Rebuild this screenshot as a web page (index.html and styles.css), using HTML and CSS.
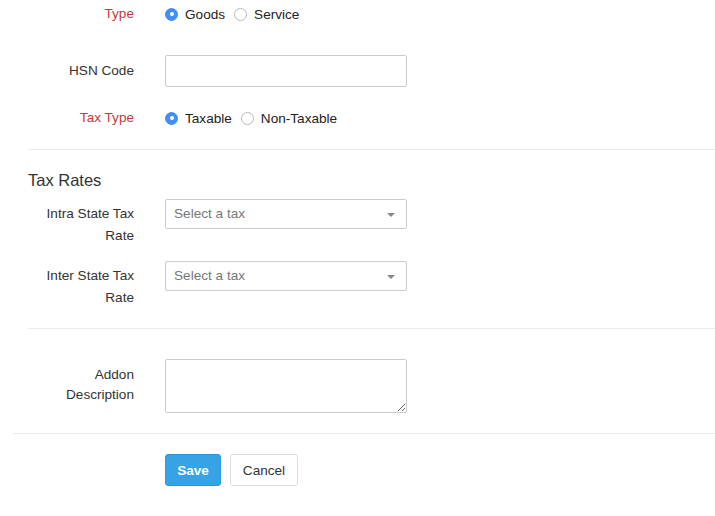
FILE: index.html
```html
<!DOCTYPE html>
<html>
<head>
<meta charset="utf-8">
<link rel="stylesheet" href="styles.css">
</head>
<body>
<form class="form">
  <div class="section">
    <div class="row row-radio">
      <label class="lbl required">Type</label>
      <div class="ctrl radios">
        <span class="radio checked"></span><span class="rtext">Goods</span>
        <span class="radio"></span><span class="rtext">Service</span>
      </div>
    </div>
    <div class="row row-hsn">
      <label class="lbl lbl-input">HSN Code</label>
      <div class="ctrl"><input class="input" type="text"></div>
    </div>
    <div class="row row-radio row-taxtype">
      <label class="lbl required">Tax Type</label>
      <div class="ctrl radios">
        <span class="radio checked"></span><span class="rtext">Taxable</span>
        <span class="radio"></span><span class="rtext">Non-Taxable</span>
      </div>
    </div>
  </div>
  <div class="section section-rates">
    <h3 class="heading">Tax Rates</h3>
    <div class="row row-tax">
      <label class="lbl lbl-tax">Intra State Tax Rate</label>
      <div class="ctrl"><div class="select"><span class="ph">Select a tax</span><span class="caret"></span></div></div>
    </div>
    <div class="row row-tax row-inter">
      <label class="lbl lbl-tax">Inter State Tax Rate</label>
      <div class="ctrl"><div class="select"><span class="ph">Select a tax</span><span class="caret"></span></div></div>
    </div>
  </div>
  <div class="section section-addon">
    <div class="row row-addon">
      <label class="lbl lbl-addon">Addon Description</label>
      <div class="ctrl"><textarea class="textarea"></textarea></div>
    </div>
  </div>
  <div class="actions">
    <button type="button" class="btn btn-primary">Save</button>
    <button type="button" class="btn btn-default">Cancel</button>
  </div>
</form>
</body>
</html>
```
FILE: styles.css
```css
html, body {
  margin: 0;
  padding: 0;
  background: #fff;
}
body {
  font-family: "Liberation Sans", Arial, sans-serif;
  font-size: 13.6px;
  color: #333;
}
.form {
  padding-left: 13px;
}
.section {
  margin-left: 15px;
  border-bottom: 1px solid #ebebeb;
}
.section:first-child {
  padding-bottom: 17px;
}
.row {
  display: grid;
  grid-template-columns: 106px 242px;
  column-gap: 31px;
  align-items: start;
}
.lbl {
  text-align: right;
  color: #333;
}
.lbl.required {
  color: #c23b3b;
}
.row-radio {
  height: 28px;
  align-items: center;
}
.row-radio .lbl {
  line-height: 28px;
}
.row-hsn {
  margin-top: 27px;
}
.lbl-input {
  line-height: 32px;
}
.row-taxtype {
  margin-top: 17px;
}
.radios {
  display: flex;
  align-items: center;
  white-space: nowrap;
  height: 28px;
}
.radio {
  box-sizing: border-box;
  width: 13px;
  height: 13px;
  border-radius: 50%;
  border: 1px solid #b8b8b8;
  background: #fff;
  margin-right: 7px;
  flex: none;
  position: relative;
}
.radio.checked {
  background: #408dfb;
  border-color: #408dfb;
}
.radio.checked::after {
  content: "";
  position: absolute;
  left: 3.5px;
  top: 3.5px;
  width: 4px;
  height: 4px;
  border-radius: 50%;
  background: #fff;
}
.rtext {
  margin-right: 9px;
  color: #222;
}
.input {
  box-sizing: border-box;
  width: 242px;
  height: 32px;
  border: 1px solid #ccc;
  border-radius: 2px;
  margin: 0;
  padding: 0 8px;
  font: inherit;
  display: block;
}
.section-rates {
  padding-top: 18px;
  padding-bottom: 19px;
}
.heading {
  margin: 0 0 7px 0;
  font-weight: normal;
  font-size: 16.5px;
  line-height: 24px;
  color: #333;
}
.lbl-tax {
  padding-top: 4px;
  line-height: 22px;
}
.row-inter {
  margin-top: 14px;
}
.select {
  box-sizing: border-box;
  width: 242px;
  height: 30px;
  border: 1px solid #ccc;
  border-radius: 2px;
  display: flex;
  align-items: center;
  justify-content: space-between;
  padding: 0 11px 0 8px;
}
.ph {
  color: #777;
  margin-top: -2px;
}
.caret {
  width: 0;
  height: 0;
  border-left: 4px solid transparent;
  border-right: 4px solid transparent;
  border-top: 4px solid #888;
  margin-top: 2px;
}
.section-addon {
  margin-left: 0;
  padding-left: 15px;
  padding-top: 30px;
  padding-bottom: 20px;
}
.lbl-addon {
  padding-top: 6px;
  line-height: 20px;
}
.textarea {
  box-sizing: border-box;
  width: 242px;
  height: 54px;
  border: 1px solid #ccc;
  border-radius: 2px;
  margin: 0;
  display: block;
  font: inherit;
}
.actions {
  padding-top: 20px;
  padding-left: 152px;
  display: flex;
  gap: 9px;
}
.btn {
  box-sizing: border-box;
  height: 32px;
  border-radius: 3px;
  font-family: inherit;
  font-size: 13.6px;
  margin: 0;
  cursor: pointer;
}
.btn-primary {
  width: 56px;
  background: #37a2e4;
  border: 1px solid #2f98da;
  color: #fff;
  font-weight: bold;
}
.btn-default {
  width: 68px;
  background: #fff;
  border: 1px solid #dcdcdc;
  color: #333;
}
```
